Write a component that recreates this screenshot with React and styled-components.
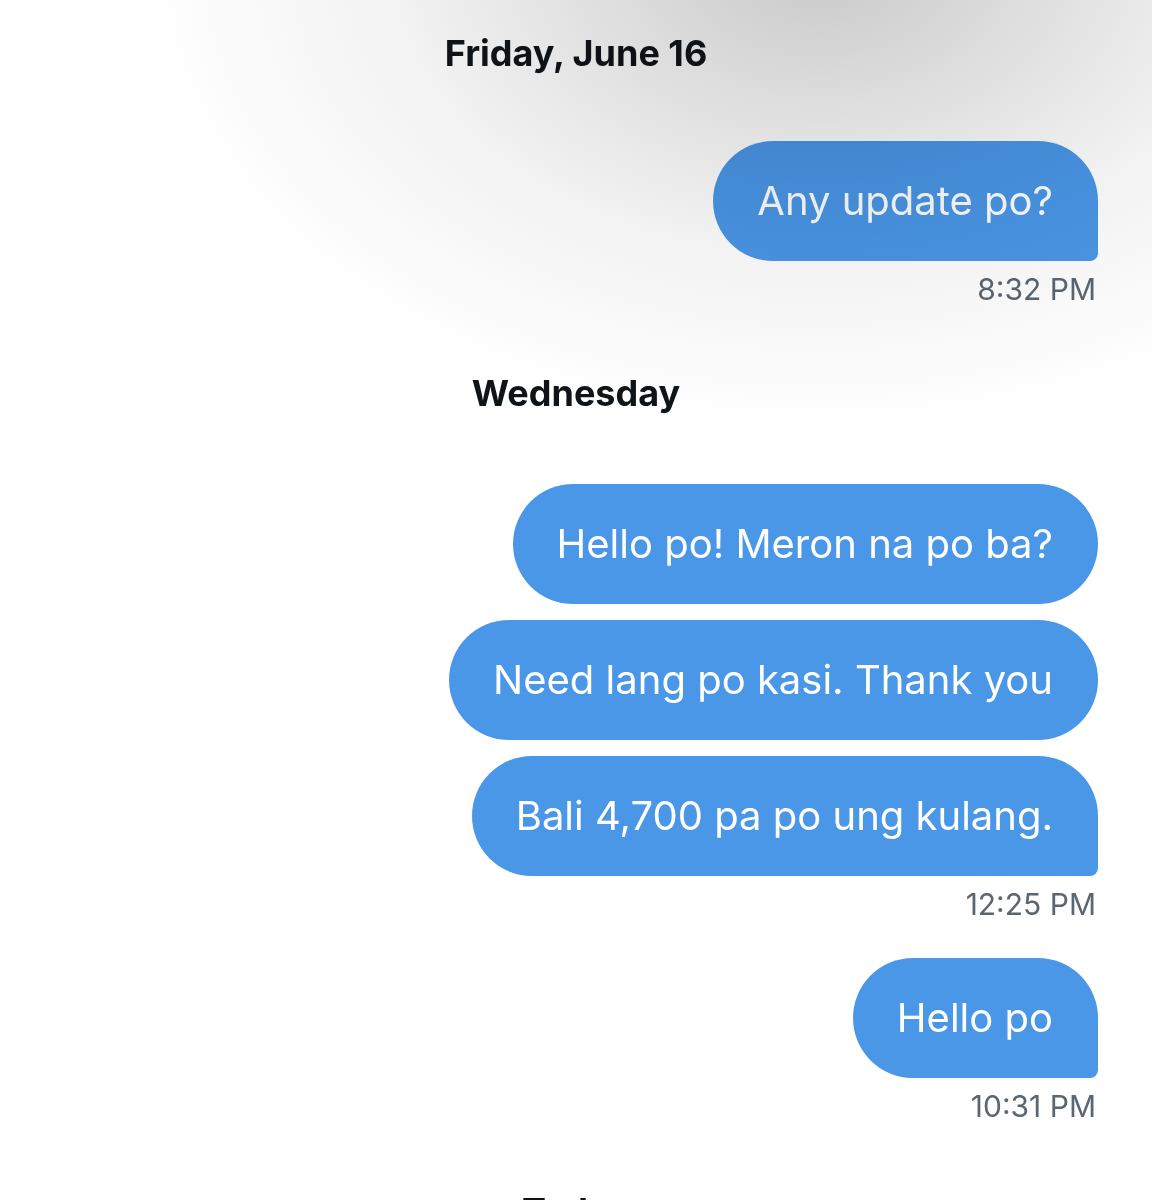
import React from 'react';
import styled, { createGlobalStyle } from 'styled-components';

const GlobalStyle = createGlobalStyle`
  html, body {
    margin: 0;
    padding: 0;
    background: #ffffff;
  }
  * {
    box-sizing: border-box;
  }
`;

const Screen = styled.main`
  position: relative;
  width: 1152px;
  height: 1200px;
  overflow: hidden;
  padding: 32px 54px 0 54px;
  background: #ffffff;
  font-family: Inter, "Noto Sans", "Liberation Sans", sans-serif;

  /* soft grey shade falling over the top of the thread */
  &::after {
    content: '';
    position: absolute;
    inset: 0;
    pointer-events: none;
    mix-blend-mode: multiply;
    background: radial-gradient(
      ellipse 680px 470px at 820px -40px,
      #c8c8c8 0%,
      #dddddd 30%,
      #f2f2f2 62%,
      #ffffff 100%
    );
  }
`;

const DayLabel = styled.h2`
  margin: ${(p) => p.$gap || 0}px 0 0;
  text-align: center;
  font-size: 36px;
  line-height: 42px;
  font-weight: 700;
  color: #0f1419;
`;

const Group = styled.section`
  display: flex;
  flex-direction: column;
  align-items: flex-end;
  gap: 16px;
  margin-top: ${(p) => p.$gap}px;
`;

const Bubble = styled.div`
  height: 120px;
  padding: 0 45px 0 44px;
  display: flex;
  align-items: center;
  background: #4a97e8;
  color: #ffffff;
  font-size: 40px;
  line-height: 48px;
  font-weight: 400;
  white-space: nowrap;
  border-radius: 60px;
  border-bottom-right-radius: ${(p) => (p.$tail ? '8px' : '60px')};
`;

const Time = styled.div`
  margin-top: -6px;
  font-size: 30px;
  line-height: 36px;
  color: #5b6670;
  text-align: right;
  padding-right: 2px;
`;

const thread = [
  {
    day: 'Friday, June 16',
    gap: 0,
    groups: [{ gap: 67, messages: ['Any update po?'], time: '8:32 PM' }],
  },
  {
    day: 'Wednesday',
    gap: 65,
    groups: [
      {
        gap: 70,
        messages: [
          'Hello po! Meron na po ba?',
          'Need lang po kasi. Thank you',
          'Bali 4,700 pa po ung kulang.',
        ],
        time: '12:25 PM',
      },
      { gap: 36, messages: ['Hello po'], time: '10:31 PM' },
    ],
  },
  { day: 'Today', gap: 66, groups: [] },
];

export default function App() {
  return (
    <>
      <GlobalStyle />
      <Screen>
        {thread.map((d) => (
          <React.Fragment key={d.day}>
            <DayLabel $gap={d.gap}>{d.day}</DayLabel>
            {d.groups.map((g, gi) => (
              <Group key={gi} $gap={g.gap}>
                {g.messages.map((m, i) => (
                  <Bubble key={i} $tail={i === g.messages.length - 1}>
                    {m}
                  </Bubble>
                ))}
                <Time>{g.time}</Time>
              </Group>
            ))}
          </React.Fragment>
        ))}
      </Screen>
    </>
  );
}
